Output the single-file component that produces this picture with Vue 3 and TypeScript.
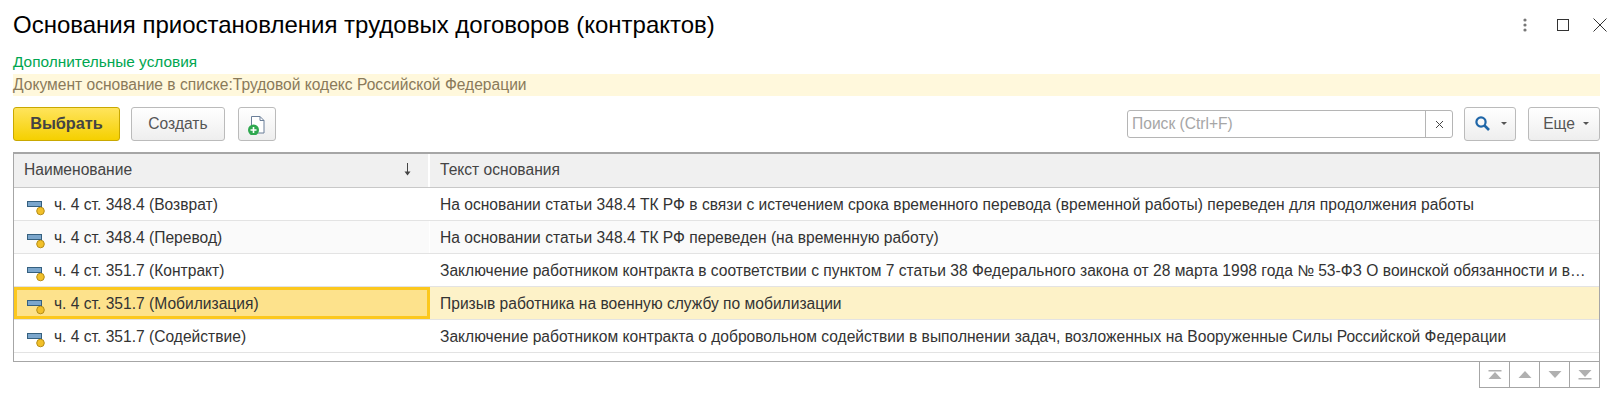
<script setup lang="ts">
interface Row { name: string; text: string; current?: boolean }
const rows: Row[] = [
  { name: 'ч. 4 ст. 348.4 (Возврат)', text: 'На основании статьи 348.4 ТК РФ в связи с истечением срока временного перевода (временной работы) переведен для продолжения работы' },
  { name: 'ч. 4 ст. 348.4 (Перевод)', text: 'На основании статьи 348.4 ТК РФ переведен (на временную работу)' },
  { name: 'ч. 4 ст. 351.7 (Контракт)', text: 'Заключение работником контракта в соответствии с пунктом 7 статьи 38 Федерального закона от 28 марта 1998 года № 53-ФЗ О воинской обязанности и военной службе' },
  { name: 'ч. 4 ст. 351.7 (Мобилизация)', text: 'Призыв работника на военную службу по мобилизации', current: true },
  { name: 'ч. 4 ст. 351.7 (Содействие)', text: 'Заключение работником контракта о добровольном содействии в выполнении задач, возложенных на Вооруженные Силы Российской Федерации' },
]
</script>

<template>
  <div class="form">
    <header class="head">
      <h1 class="title">Основания приостановления трудовых договоров (контрактов)</h1>
      <div class="win">
        <svg width="16" height="16" viewBox="0 0 16 16"><g fill="#777"><circle cx="8" cy="3" r="1.6"/><circle cx="8" cy="8" r="1.6"/><circle cx="8" cy="13" r="1.6"/></g></svg>
        <svg width="12" height="12" viewBox="0 0 12 12"><rect x="0.5" y="0.5" width="11" height="11" fill="none" stroke="#333"/></svg>
        <svg width="14" height="14" viewBox="0 0 14 14"><path d="M0.500 0.500l13 13M13.500 0.500l-13 13" stroke="#333" fill="none"/></svg>
      </div>
    </header>
    <div class="cond">Дополнительные условия</div>
    <div class="banner">Документ основание в списке:Трудовой кодекс Российской Федерации</div>
    <div class="bar">
      <button class="btn primary">Выбрать</button>
      <button class="btn create">Создать</button>
      <button class="btn add" aria-label="Создать по образцу">
        <svg width="20" height="22" viewBox="0 0 20 22">
          <path d="M4.500 3.500h8.500l4 4v12.500H4.500z" fill="#fff" stroke="#6b7f99"/>
          <path d="M13 3.500v4h4" fill="none" stroke="#6b7f99"/>
          <circle cx="6.500" cy="17" r="5.500" fill="#2fa84f"/>
          <path d="M6.500 14v6M3.500 17h6" stroke="#fff" stroke-width="1.600"/>
        </svg>
      </button>
      <div class="spacer"></div>
      <div class="search">
        <span class="ph">Поиск (Ctrl+F)</span>
        <span class="clear">
          <svg width="9" height="9" viewBox="0 0 9 9"><path d="M1 1l7 7M8 1L1 8" stroke="#444" fill="none"/></svg>
        </span>
      </div>
      <button class="btn find" aria-label="Найти">
        <svg width="17" height="17" viewBox="0 0 17 17"><circle cx="7" cy="7" r="4.600" fill="none" stroke="#1f66a8" stroke-width="2.200"/><path d="M10.500 10.500l4.500 4.500" stroke="#1f66a8" stroke-width="2.600"/></svg>
        <i class="caret"></i>
      </button>
      <button class="btn more">Еще <i class="caret"></i></button>
    </div>
    <div class="table">
      <div class="thead">
        <div class="th first">Наименование
          <svg class="sort" width="9" height="13" viewBox="0 0 9 13"><path d="M4.500 0v11" stroke="#444"/><path d="M1.500 8.500h6l-3 4z" fill="#444"/></svg>
        </div>
        <div class="th second">Текст основания</div>
      </div>
      <div v-for="(row, i) in rows" :key="row.name" class="row" :class="{ alt: i % 2 === 1, current: row.current }">
        <div class="cell first">
          <svg class="ico" width="18" height="15" viewBox="0 0 18 15">
            <rect x="0.500" y="0.500" width="14" height="5" fill="#7ba6cc" stroke="#35607f"/>
            <circle cx="13.500" cy="10" r="3.800" fill="#f2c029" stroke="#b58d18"/>
          </svg>
          <span class="txt">{{ row.name }}</span>
        </div>
        <div class="cell second"><span class="txt">{{ row.text }}</span></div>
      </div>
      <div class="tail"></div>
    </div>
    <div class="pager">
      <button class="pg" aria-label="В начало"><svg width="14" height="10" viewBox="0 0 14 10"><path d="M0.500 0h13v1.500H0.500zM7 2l6.500 7H0.500z" fill="#b0b0b0"/></svg></button>
      <button class="pg" aria-label="Назад"><svg width="14" height="10" viewBox="0 0 14 10"><path d="M7 1l6.500 7H0.500z" fill="#b0b0b0"/></svg></button>
      <button class="pg" aria-label="Вперёд"><svg width="14" height="10" viewBox="0 0 14 10"><path d="M0.500 1h13L7 8z" fill="#b0b0b0"/></svg></button>
      <button class="pg" aria-label="В конец"><svg width="14" height="10" viewBox="0 0 14 10"><path d="M0.500 0h13L7 7zM0.500 8h13v1.500H0.500z" fill="#b0b0b0"/></svg></button>
    </div>
  </div>
</template>

<style>
html, body { background: #fff; }
</style>

<style scoped>
.form { width: 1621px; height: 404px; padding: 0 21px 0 13px; box-sizing: border-box; font-family: "Liberation Sans", Arial, sans-serif; font-size: 15.6px; color: #333; overflow: hidden; }
.head { display: flex; align-items: center; height: 50px; }
.title { flex: 1; margin: 0; font-size: 24px; font-weight: 400; color: #000; }
.win { display: flex; align-items: center; gap: 24px; margin-right: -7px; }
.cond { height: 24px; line-height: 24px; color: #00a650; font-size: 15.4px; }
.banner { height: 22px; line-height: 22px; background: #fff8dc; color: #8a7a5a; }
.bar { display: flex; align-items: flex-start; margin-top: 11px; height: 34px; }
.btn { box-sizing: border-box; height: 34px; border: 1px solid #bbb; border-radius: 3px; background: linear-gradient(#fff, #eee); font: inherit; color: #555; padding: 0 0 1px; display: flex; align-items: center; justify-content: center; }
.primary { width: 107px; font-weight: 700; font-size: 16.3px; color: #444; background: linear-gradient(#ffe45c, #f5d000); border-color: #c9a800; }
.create { width: 94px; margin-left: 11px; }
.add { width: 38px; margin-left: 13px; }
.spacer { flex: 1; }
.search { display: flex; width: 326px; height: 28px; margin-top: 3px; box-sizing: border-box; border: 1px solid #b5b5b5; border-radius: 3px; background: #fff; }
.ph { flex: 1; line-height: 26px; padding-left: 4px; color: #a6a6a6; }
.clear { width: 26px; border-left: 1px solid #b5b5b5; display: flex; align-items: center; justify-content: center; }
.find { width: 52px; margin-left: 11px; gap: 10px; }
.more { width: 72px; margin-left: 12px; gap: 8px; padding-left: 4px; }
.caret { width: 0; height: 0; border: 3px solid transparent; border-top-color: #555; border-bottom: 0; }
.table { margin-top: 11px; border: 1px solid #a6a6a6; border-width: 2px 1px 1px; height: 210px; box-sizing: border-box; }
.thead { display: flex; height: 33px; background: #f0f0f0; border-bottom: 1px solid #c8c8c8; }
.th { display: flex; align-items: center; color: #444; padding-bottom: 2px; box-sizing: border-box; }
.first { width: 416px; box-sizing: border-box; flex: none; }
.th.first { padding-left: 10px; justify-content: space-between; padding-right: 16px; border-right: 2px solid #fff; }
.th.second, .cell.second { padding-left: 10px; padding-right: 12px; flex: 1; min-width: 0; }
.row { display: flex; height: 33px; box-sizing: border-box; border-bottom: 1px solid #e3e3e3; }
.alt { background: #fafafa; }
.cell { display: flex; align-items: center; padding-top: 2px; }
.cell.first { padding-left: 13px; border-right: 1px solid #fff; }
.ico { margin: 6px 9px 0 0; flex: none; }
.txt { overflow: hidden; white-space: nowrap; text-overflow: ellipsis; }
.current { background: #fdf2c8; }
.current .cell.first { background: #fde28c; outline: 3px solid #fcc81e; outline-offset: -3px; }
.pager { display: flex; justify-content: flex-end; }
.pg { box-sizing: border-box; width: 30px; height: 26px; border: 1px solid #a6a6a6; border-top-width: 0; border-left-width: 0; background: #fff; padding: 0; display: flex; align-items: center; justify-content: center; }
.pg:first-child { border-left-width: 1px; width: 31px; }
</style>
